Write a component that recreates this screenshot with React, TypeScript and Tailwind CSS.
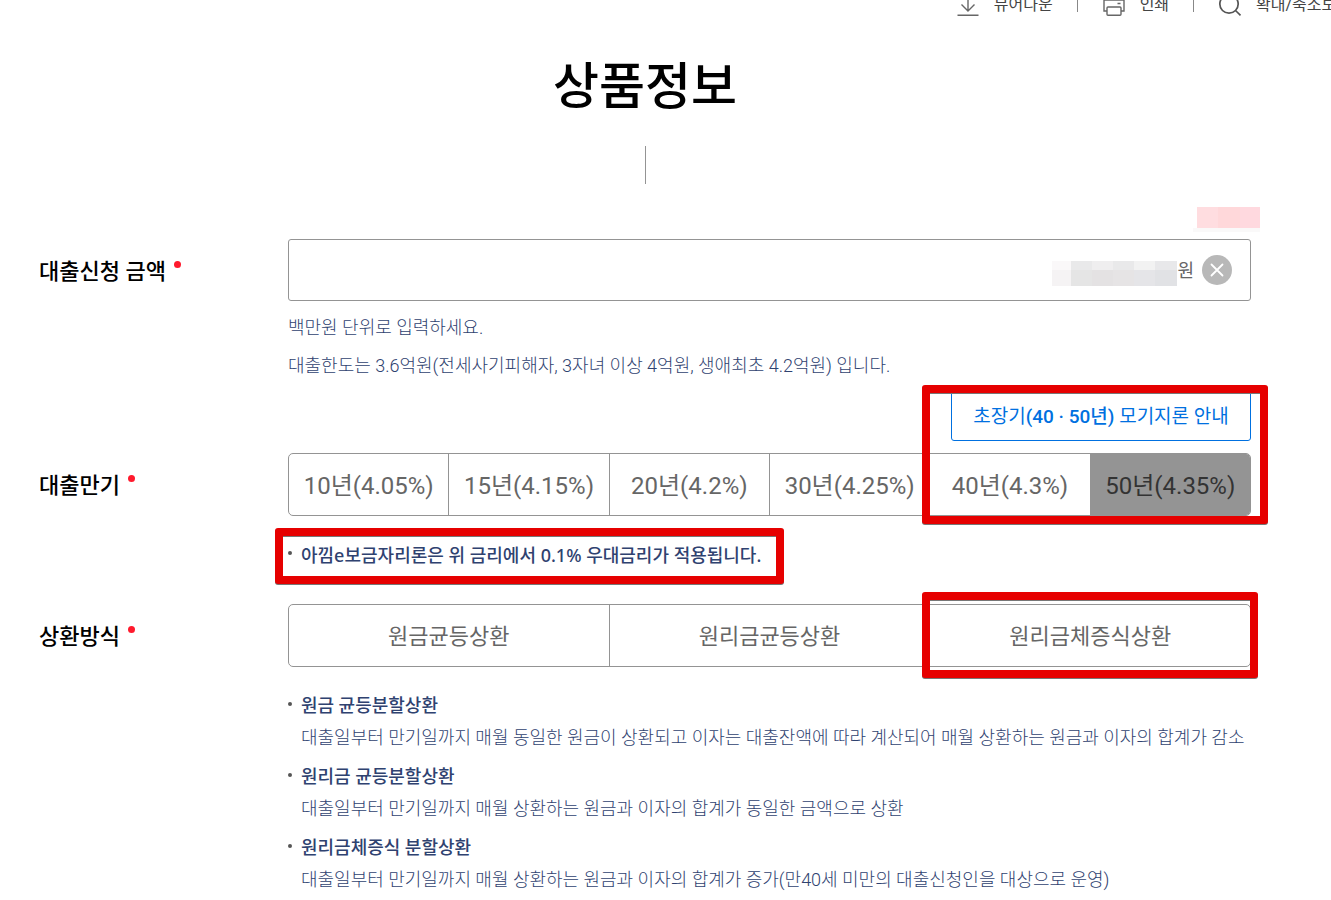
import { useState } from 'react';
import type { ReactNode } from 'react';

const maturities = ['10년(4.05%)', '15년(4.15%)', '20년(4.2%)', '30년(4.25%)', '40년(4.3%)', '50년(4.35%)'];

const methods = ['원금균등상환', '원리금균등상환', '원리금체증식상환'];

const descriptions = [
  {
    title: '원금 균등분할상환',
    text: '대출일부터 만기일까지 매월 동일한 원금이 상환되고 이자는 대출잔액에 따라 계산되어 매월 상환하는 원금과 이자의 합계가 감소',
  },
  {
    title: '원리금 균등분할상환',
    text: '대출일부터 만기일까지 매월 상환하는 원금과 이자의 합계가 동일한 금액으로 상환',
  },
  {
    title: '원리금체증식 분할상환',
    text: '대출일부터 만기일까지 매월 상환하는 원금과 이자의 합계가 증가(만40세 미만의 대출신청인을 대상으로 운영)',
  },
];

function RequiredDot() {
  return <span className="mb-3.5 ml-2 inline-block h-[7px] w-[7px] rounded-full bg-[#ff1a2d]" />;
}

function Row({ children }: { children: ReactNode }) {
  return <div className="grid grid-cols-[249px_minmax(0,1fr)]">{children}</div>;
}

function Bullet() {
  return <span className="mb-1 mr-[9px] h-1 w-1 shrink-0 rounded-full bg-[#555]" />;
}

interface SegmentedProps {
  name: string;
  label: string;
  options: string[];
  value: string;
  textClass: string;
  onChange: (value: string) => void;
}

function Segmented({ name, label, options, value, textClass, onChange }: SegmentedProps) {
  return (
    <div
      role="radiogroup"
      aria-label={label}
      className="flex h-[63px] divide-x divide-[#949494] overflow-hidden rounded-[5px] border border-[#949494]"
    >
      {options.map((option) => (
        <label
          key={option}
          className={`relative flex flex-1 cursor-pointer items-center justify-center whitespace-nowrap pt-0.5 text-[#666] has-checked:bg-[#949494] has-checked:text-[#333] ${textClass}`}
        >
          <input
            type="radio"
            name={name}
            className="sr-only"
            checked={value === option}
            onChange={() => onChange(option)}
          />
          {option}
        </label>
      ))}
    </div>
  );
}

function Toolbar() {
  return (
    <header className="h-[17px] overflow-hidden">
      <div className="-mr-5 -mt-[11px] flex h-[30px] items-center justify-end whitespace-nowrap text-base text-[#444]">
        <a href="#viewer" className="flex items-center">
          <svg className="mr-[14px] h-6 w-6" viewBox="0 0 24 24" fill="none" stroke="#666" strokeWidth="1.4">
            <path d="M12 1v18M5.5 12.5l6.5 6.500 6.500-6.500M1.500 23.300h21" />
          </svg>
          <span className="pt-0.5">뷰어다운</span>
        </a>
        <span className="mx-6 h-4 w-px bg-[#888]" />
        <a href="#print" className="flex items-center">
          <svg className="mr-[14px] h-6 w-6" viewBox="0 0 24 24" fill="none" stroke="#666" strokeWidth="1.4">
            <path d="M6 8V2h12v6M5 19H2V8h20v11h-3M15.500 11.500h3" />
            <rect x="5" y="15" width="14" height="8.300" rx="1" />
          </svg>
          <span className="pt-0.5">인쇄</span>
        </a>
        <span className="mx-6 h-4 w-px bg-[#888]" />
        <a href="#zoom" className="flex items-center">
          <svg className="mr-[14px] h-6 w-6" viewBox="0 0 24 24" fill="none" stroke="#555" strokeWidth="1.7">
            <circle cx="11" cy="12" r="9.200" />
            <path d="M17.500 18.500l5 4.800" />
          </svg>
          <span className="pt-0.5">확대/축소보기</span>
        </a>
      </div>
    </header>
  );
}

export default function App() {
  const [amount, setAmount] = useState('');
  const [maturity, setMaturity] = useState('50년(4.35%)');
  const [method, setMethod] = useState('');

  return (
    <div className="overflow-hidden bg-white pb-1 font-[Roboto,'Noto_Sans_CJK_KR',sans-serif]">
      <Toolbar />

      <main className="pl-[39px] pr-20">
        <h1 className="mt-[33px] text-center text-[50px] font-medium leading-[74px] text-black">상품정보</h1>
        <div className="mx-auto mt-[22px] h-[38px] w-px bg-[#949494]" />

        <div className="mt-[55px]">
          <Row>
            <label htmlFor="amount" className="flex h-[62px] items-center pt-0.5 text-[22px] font-medium text-black">
              대출신청 금액
              <RequiredDot />
            </label>
            <div className="relative">
              <svg className="absolute -right-[9px] -top-8 h-[25px] w-[67px]" viewBox="0 0 67 25" shapeRendering="crispEdges">
                <rect x="0" y="21" width="67" height="4" fill="#faf9f9" />
                <rect x="4" y="0" width="21" height="21" fill="#ffdde0" />
                <rect x="25" y="0" width="22" height="21" fill="#ffd8da" />
                <rect x="47" y="0" width="20" height="21" fill="#ffd9df" />
              </svg>
              <div className="flex h-[62px] items-center rounded-[3px] border border-[#949494] pr-[18px]">
                <input
                  id="amount"
                  type="text"
                  value={amount}
                  onChange={(e) => setAmount(e.target.value)}
                  className="h-full min-w-0 flex-1 bg-transparent px-5 text-right text-lg outline-none"
                />
                <svg className="mt-1.5 h-[25px] w-[125px]" viewBox="0 0 125 25" shapeRendering="crispEdges">
                  <path fill="#faf8f9" d="M0 0h19v9H0z" />
                  <path fill="#f5f3f4" d="M0 9h19v16H0z" />
                  <path fill="#e9e9ea" d="M19 0h21v9H19zM61 0h21v9H61z" />
                  <path fill="#efeeef" d="M40 0h21v9H40z" />
                  <path fill="#f2f2f2" d="M82 0h21v9H82z" />
                  <path fill="#e8e8ea" d="M103 0h22v9h-22z" />
                  <path fill="#e5e5e5" d="M19 9h21v16H19z" />
                  <path fill="#e4e2e3" d="M40 9h21v16H40z" />
                  <path fill="#e6e4e5" d="M61 9h21v16H61z" />
                  <path fill="#e5e5e8" d="M82 9h21v16H82z" />
                  <path fill="#e1e2e5" d="M103 9h22v16h-22z" />
                </svg>
                <span className="pt-0.5 text-lg text-[#666]">원</span>
                <button
                  type="button"
                  aria-label="지우기"
                  onClick={() => setAmount('')}
                  className="ml-2 flex h-[30px] w-[30px] items-center justify-center rounded-full bg-[#b8b8b8]"
                >
                  <svg className="h-3.5 w-3.5" viewBox="0 0 14 14" stroke="#fff" strokeWidth="1.8" strokeLinecap="round">
                    <path d="M1.500 1.500l11 11M12.500 1.500l-11 11" />
                  </svg>
                </button>
              </div>
              <div className="mt-2 text-lg font-light leading-[38px] text-[#2f4270]">
                <p>백만원 단위로 입력하세요.</p>
                <p>대출한도는 3.6억원(전세사기피해자, 3자녀 이상 4억원, 생애최초 4.2억원) 입니다.</p>
              </div>
            </div>
          </Row>

          <Row>
            <div className="mt-[68px] flex h-[63px] items-center pt-0.5 text-[22px] font-medium text-black">
              대출만기
              <RequiredDot />
            </div>
            <div className="relative mt-1.5">
              <div className="flex justify-end">
                <button
                  type="button"
                  className="h-[50px] w-[300px] whitespace-nowrap rounded-[3px] border border-[#0070e0] pt-0.5 text-[19px] text-[#0070e0]"
                >
                  초장기<strong className="font-medium">(40 · 50년)</strong> 모기지론 안내
                </button>
              </div>
              <div className="mt-3">
                <Segmented
                  name="maturity"
                  label="대출만기"
                  options={maturities}
                  value={maturity}
                  textClass="text-2xl"
                  onChange={setMaturity}
                />
              </div>
              <div className="absolute -right-[17px] -top-1.5 h-[139px] w-[346px] rounded-[3px] border-8 border-[#e60000] drop-shadow-[0_1px_0_#777]" />
            </div>
          </Row>

          <Row>
            <div className="relative col-start-2 mt-3">
              <p className="flex h-14 items-center whitespace-nowrap pb-0.5 font-['Noto_Sans','Noto_Sans_CJK_KR',sans-serif] text-lg font-medium text-[#2f4270]">
                <Bullet />
                아낌e보금자리론은 위 금리에서 0.1% 우대금리가 적용됩니다.
              </p>
              <div className="absolute -left-[13px] top-0 h-14 w-[509px] rounded-[3px] border-8 border-[#e60000] drop-shadow-[0_1px_0_#777]" />
            </div>
          </Row>

          <Row>
            <div className="mt-5 flex h-[63px] items-center pt-0.5 text-[22px] font-medium text-black">
              상환방식
              <RequiredDot />
            </div>
            <div className="mt-5">
              <div className="relative">
                <Segmented
                  name="method"
                  label="상환방식"
                  options={methods}
                  value={method}
                  textClass="text-[22px]"
                  onChange={setMethod}
                />
                <div className="absolute -right-[7px] -top-3 h-[86px] w-[336px] rounded-[3px] border-8 border-[#e60000] drop-shadow-[0_1px_0_#777]" />
              </div>
              <ul className="mt-[23px] flex flex-col gap-[7px] text-lg leading-8 text-[#2f4270]">
                {descriptions.map((item) => (
                  <li key={item.title}>
                    <div className="flex items-center font-medium">
                      <Bullet />
                      {item.title}
                    </div>
                    <p className="whitespace-nowrap pl-[13px] font-light">{item.text}</p>
                  </li>
                ))}
              </ul>
            </div>
          </Row>
        </div>
      </main>
    </div>
  );
}
